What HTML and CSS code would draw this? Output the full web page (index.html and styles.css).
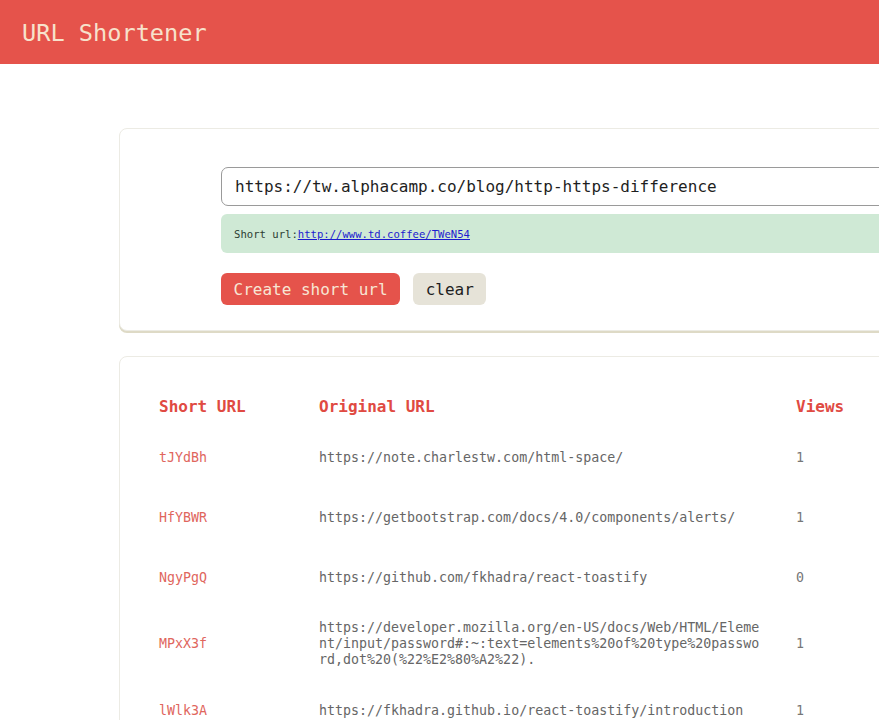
FILE: index.html
```html
<!DOCTYPE html>
<html lang="en">
<head>
<meta charset="utf-8">
<title>URL Shortener</title>
<link rel="stylesheet" href="styles.css">
</head>
<body>
<header class="topbar">
  <h1 class="brand">URL Shortener</h1>
</header>
<main class="main">
  <section class="card form-card">
    <input class="url-input" type="text" value="https://tw.alphacamp.co/blog/http-https-difference">
    <div class="alert">Short url:<a href="#" class="alert-link">http://www.td.coffee/TWeN54</a></div>
    <div class="actions">
      <button class="btn btn-primary">Create short url</button>
      <button class="btn btn-light">clear</button>
    </div>
  </section>
  <section class="card list-card">
    <table class="url-table">
      <thead>
        <tr><th class="col-short">Short URL</th><th class="col-orig">Original URL</th><th class="col-views">Views</th></tr>
      </thead>
      <tbody>
        <tr><td class="short">tJYdBh</td><td class="orig"><div class="orig-text">https://note.charlestw.com/html-space/</div></td><td class="views">1</td></tr>
        <tr><td class="short">HfYBWR</td><td class="orig"><div class="orig-text">https://getbootstrap.com/docs/4.0/components/alerts/</div></td><td class="views">1</td></tr>
        <tr><td class="short">NgyPgQ</td><td class="orig"><div class="orig-text">https://github.com/fkhadra/react-toastify</div></td><td class="views">0</td></tr>
        <tr><td class="short">MPxX3f</td><td class="orig"><div class="orig-text">https://developer.mozilla.org/en-US/docs/Web/HTML/Element/input/password#:~:text=elements%20of%20type%20password,dot%20(%22%E2%80%A2%22).</div></td><td class="views">1</td></tr>
        <tr><td class="short">lWlk3A</td><td class="orig"><div class="orig-text">https://fkhadra.github.io/react-toastify/introduction</div></td><td class="views">1</td></tr>
      </tbody>
    </table>
  </section>
</main>
</body>
</html>
```
FILE: styles.css
```css
html, body {
  margin: 0;
  padding: 0;
  background: #ffffff;
  overflow: hidden;
  font-family: "DejaVu Sans Mono", "Liberation Mono", monospace;
}
.topbar {
  height: 64px;
  background: #e5534b;
  display: flex;
  align-items: center;
  padding-left: 22px;
}
.brand {
  margin: 0;
  font-size: 23.6px;
  font-weight: normal;
  color: #f7e2cc;
  padding-top: 1px;
}
.main {
  padding: 64px 0 0 119px;
  width: 1000px;
  display: flex;
  flex-direction: column;
  gap: 25px;
}
.card {
  background: #fff;
  border: 1px solid #ecebe4;
  border-radius: 8px;
  box-shadow: 0 2px 0 #dedac6;
}
.form-card {
  padding: 38px 0 25px 101px;
  display: flex;
  flex-direction: column;
}
.url-input {
  box-sizing: border-box;
  height: 39px;
  width: 800px;
  border: 1px solid #9a9a9a;
  border-radius: 7px;
  padding: 0 13px;
  font-family: "DejaVu Sans Mono", "Liberation Mono", monospace;
  font-size: 16px;
  color: #1e1e1e;
  outline: none;
}
.alert {
  margin-top: 8px;
  height: 39px;
  display: flex;
  align-items: center;
  padding-left: 13px;
  background: #cfe9d5;
  border-radius: 6px;
  font-size: 10.6px;
  color: #2c3d32;
}
.alert-link {
  color: #1c1ccf;
  text-decoration: underline;
}
.actions {
  margin-top: 20px;
  display: flex;
  gap: 13px;
}
.btn {
  height: 32px;
  border: none;
  border-radius: 6px;
  padding: 0 12.5px;
  font-family: "DejaVu Sans Mono", "Liberation Mono", monospace;
  font-size: 16px;
  cursor: pointer;
}
.btn-primary {
  background: #e5534b;
  color: #f7e6d4;
}
.btn-light {
  background: #e6e3d8;
  color: #1e1e1e;
}
.list-card {
  padding: 31px 0 0 27px;
  height: 400px;
}
.url-table {
  border-collapse: collapse;
  table-layout: fixed;
  width: 741px;
}
.url-table th {
  text-align: left;
  font-size: 16px;
  font-weight: bold;
  color: #e04a42;
  line-height: 20px;
  padding: 9px 12px 11px 12px;
}
.url-table td {
  height: 35px;
  padding: 12px 12px 13px 12px;
  font-size: 13.3px;
  line-height: 16px;
  vertical-align: middle;
}
.url-table .col-short { width: 136px; }
.url-table .col-orig { width: 453px; }
.url-table .col-views { width: 80px; }
.short {
  color: #e0665d;
}
.orig {
  color: #666;
}
.orig-text {
  width: 446px;
  line-break: anywhere;
  word-break: break-all;
}
.views {
  color: #777;
}
```
